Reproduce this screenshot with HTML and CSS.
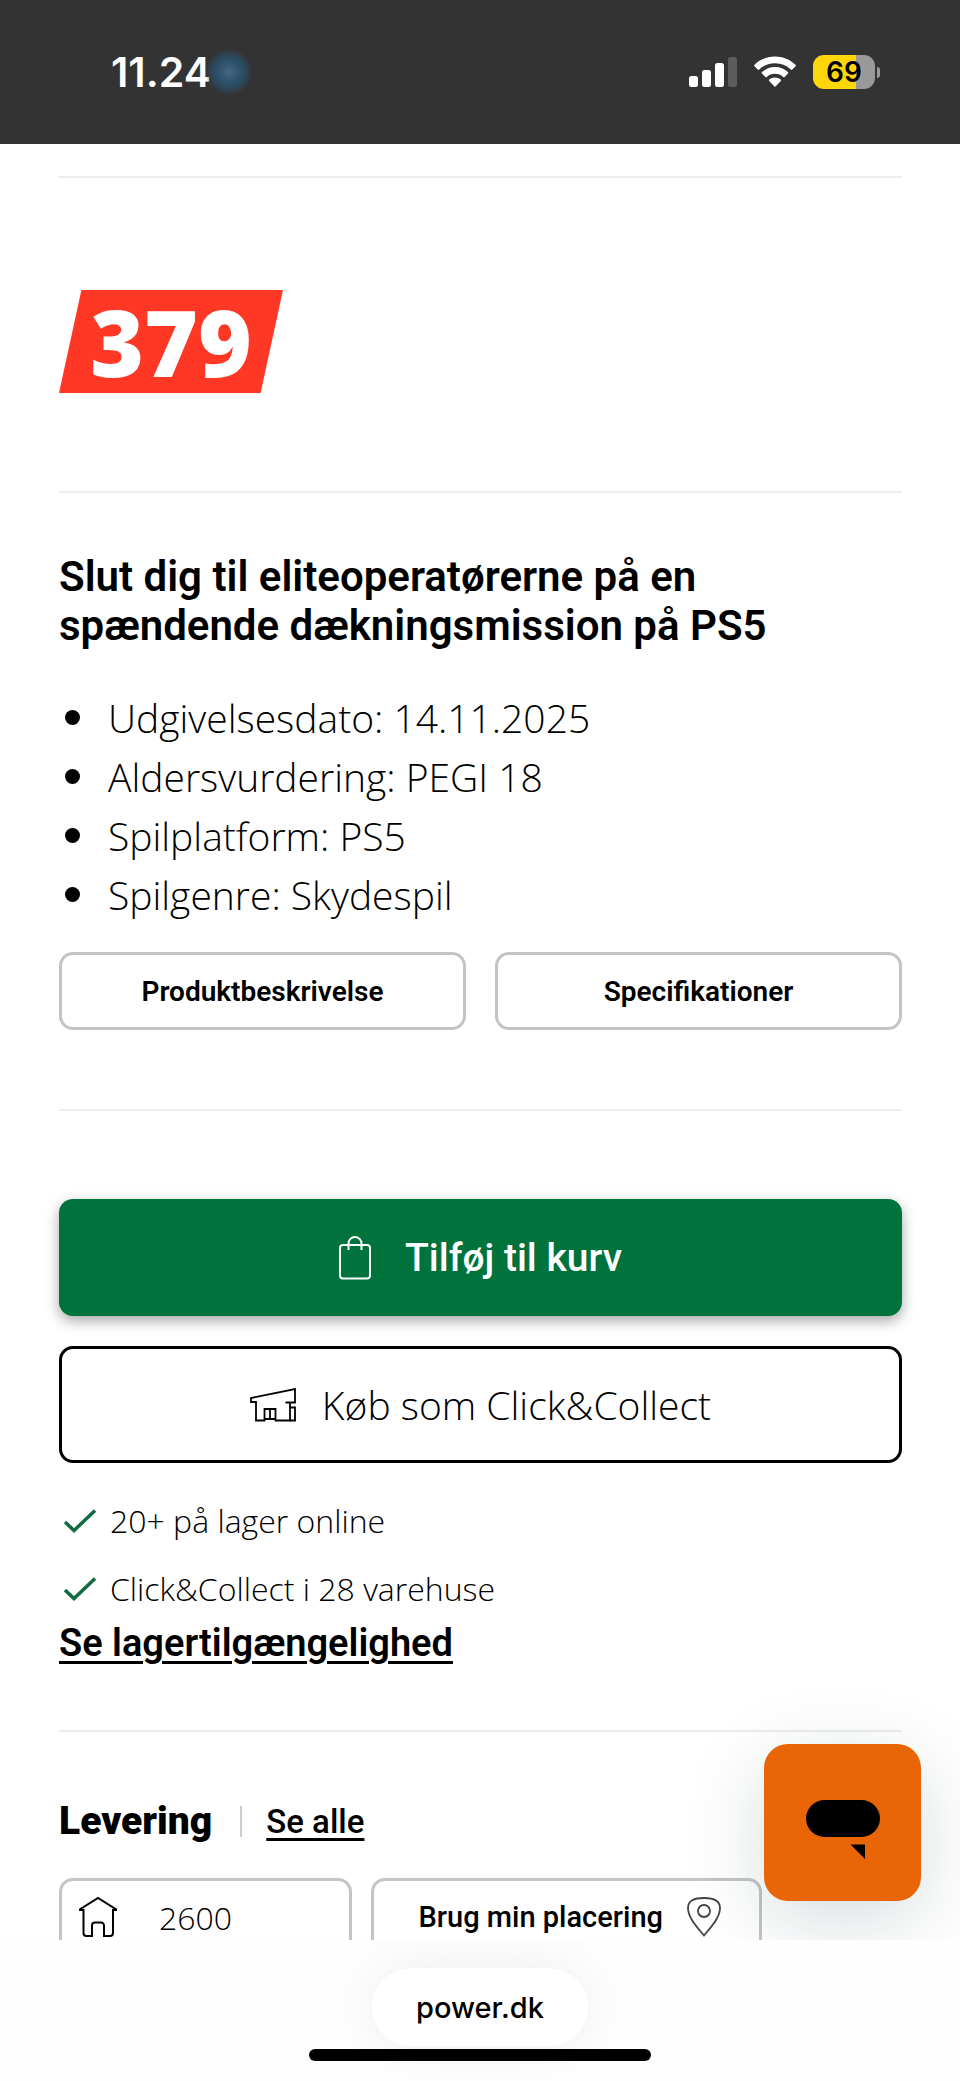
FILE: index.html
```html
<!DOCTYPE html>
<html lang="da">
<head>
<meta charset="utf-8">
<meta name="viewport" content="width=device-width, initial-scale=1">
<title>power.dk</title>
<link rel="stylesheet" href="styles.css">
</head>
<body>
<div class="screen">
  <header class="status">
    <div class="status-left">
      <span class="clock">11.24</span>
      <span class="glow"></span>
    </div>
    <div class="status-right">
      <svg class="signal" width="48" height="32" viewBox="0 0 48 32" aria-hidden="true">
        <rect x="0" y="20" width="9" height="11" rx="2.5" fill="#fff"/>
        <rect x="13" y="14" width="9" height="17" rx="2.5" fill="#fff"/>
        <rect x="26" y="7" width="9" height="24" rx="2.5" fill="#fff"/>
        <rect x="39" y="1" width="9" height="30" rx="2.5" fill="#5c5c5c"/>
      </svg>
      <svg class="wifi" width="42" height="32" viewBox="0 0 42 32" aria-hidden="true" fill="#fff">
        <path d="M21 0.500c8 0 15 3 20.500 8.300.5.500.5 1 0 1.500l-3.200 3.200c-.5.500-1 .5-1.500 0C32.500 9.400 27 7.300 21 7.300S9.500 9.400 5.200 13.500c-.5.500-1 .5-1.500 0L.5 10.300c-.5-.5-.5-1 0-1.500C6 3.500 13 .5 21 .5z"/>
        <path d="M21 11c5 0 9.500 1.900 13 5.100.5.500.5 1 0 1.500l-3.300 3.300c-.5.500-1 .500-1.500 0-2.200-2-5-3.200-8.200-3.200s-6 1.200-8.200 3.200c-.5.500-1 .5-1.500 0L8 17.600c-.5-.5-.5-1 0-1.500C11.500 12.900 16 11 21 11z"/>
        <path d="M21 21.400c2.200 0 4.200.8 5.800 2.200.5.500.5 1 0 1.500L21.800 30.300c-.5.500-1.100.5-1.600 0L15.200 25.100c-.5-.5-.5-1 0-1.500 1.600-1.400 3.600-2.200 5.800-2.200z"/>
      </svg>
      <div class="battery"><span class="battery-body">69</span><span class="battery-tip"></span></div>
    </div>
  </header>

  <main class="page">
    <section class="section price-section">
      <div class="price"><span>379</span></div>
    </section>

    <section class="section info-section">
      <h2 class="headline">Slut dig til eliteoperatørerne på en spændende dækningsmission på PS5</h2>
      <ul class="facts">
        <li>Udgivelsesdato: 14.11.2025</li>
        <li>Aldersvurdering: PEGI 18</li>
        <li>Spilplatform: PS5</li>
        <li>Spilgenre: Skydespil</li>
      </ul>
      <div class="pair">
        <button type="button" class="btn-small">Produktbeskrivelse</button>
        <button type="button" class="btn-small">Specifikationer</button>
      </div>
    </section>

    <section class="section buy-section">
      <button type="button" class="btn btn-cart">
        <svg width="32" height="44" viewBox="0 0 32 44" fill="none" stroke="#fff" stroke-width="2" aria-hidden="true">
          <rect x="1" y="9" width="30" height="33.500" rx="3"/>
          <path d="M9.500 14V7.500a6.500 6.500 0 0 1 13 0V14"/>
        </svg>
        Tilføj til kurv
      </button>
      <button type="button" class="btn btn-collect">
        <svg width="46" height="34" viewBox="0 0 46 34" fill="none" stroke="#000" stroke-width="1.800" aria-hidden="true">
          <path d="M41 14.500h4V1L1 10v4h5v18.500h8.500V21h11v11.500h14.500V14.500H35.500"/>
          <path d="M14.500 31h11M20 21v10M40 19.500h5v13h-5"/>
        </svg>
        Køb som Click&amp;Collect
      </button>
      <ul class="stock">
        <li>
          <svg width="32" height="24" viewBox="0 0 32 24" fill="none" stroke="#136c41" stroke-width="3.500" aria-hidden="true"><path d="M1 13l9 8.500L31 1.500"/></svg>
          20+ på lager online
        </li>
        <li>
          <svg width="32" height="24" viewBox="0 0 32 24" fill="none" stroke="#136c41" stroke-width="3.500" aria-hidden="true"><path d="M1 13l9 8.500L31 1.500"/></svg>
          Click&amp;Collect i 28 varehuse
        </li>
      </ul>
      <a class="stock-link" href="#">Se lagertilgængelighed</a>
    </section>

    <section class="section delivery-section">
      <div class="delivery-head">
        <h3>Levering</h3>
        <a href="#">Se alle</a>
      </div>
      <div class="delivery-row">
        <label class="zip">
          <svg width="38" height="40" viewBox="0 0 38 40" fill="none" stroke="#000" stroke-width="2" aria-hidden="true">
            <path d="M0 13L19 1l19 12h-4v23a3 3 0 0 1-3 3h-6V28.500a3 3 0 0 0-3-3h-6a3 3 0 0 0-3 3V39H7.500a3 3 0 0 1-3-3V13z"/>
          </svg>
          <input type="text" value="2600" aria-label="Postnummer">
        </label>
        <button type="button" class="locate">
          Brug min placering
          <svg width="34" height="40" viewBox="0 0 34 40" fill="none" stroke="#444" stroke-width="1.800" aria-hidden="true">
            <path d="M17 38.500C11 31 1 21 1 11 1 3.500 7 1 17 1s16 2.500 16 10c0 10-10 20-16 27.500z"/>
            <circle cx="17" cy="14" r="6"/>
          </svg>
        </button>
      </div>
    </section>

    <button type="button" class="chat" aria-label="Chat">
      <svg width="74" height="60" viewBox="0 0 74 60" aria-hidden="true">
        <rect width="74" height="37" rx="18.500"/>
        <path d="M44.500 44.500H59V59z"/>
      </svg>
    </button>
  </main>

  <footer class="browser-bar">
    <button type="button" class="address">power.dk</button>
    <div class="home-indicator"></div>
  </footer>
</div>
</body>
</html>
```
FILE: styles.css
```css
* { box-sizing: border-box; }

body {
  margin: 0;
  background: #fff;
  color: #000;
  font-family: Roboto, "Open Sans", sans-serif;
}

button, input { font: inherit; color: inherit; }
button { cursor: pointer; }
h2, h3, ul { margin: 0; padding: 0; }
svg { flex: none; display: block; }

.screen {
  display: flex;
  flex-direction: column;
  height: 100vh;
  overflow: hidden;
}

/* Status bar */
.status {
  display: flex;
  justify-content: space-between;
  align-items: center;
  flex: none;
  height: 144px;
  padding: 0 80px 0 111px;
  background: #333;
  color: #fff;
  font-family: Inter, sans-serif;
}
.status-left, .status-right { display: flex; align-items: center; }
.status-right { gap: 17px; }
.clock { font-size: 41px; font-weight: 600; }
.glow {
  width: 48px;
  height: 48px;
  margin-left: -6px;
  border-radius: 50%;
  background: radial-gradient(circle, #49657a 0, #2c536f 30%, #2d4659 50%, rgba(51, 51, 51, 0) 70%);
}
.battery { display: flex; align-items: center; gap: 2px; }
.battery-body {
  width: 62px;
  height: 34px;
  border-radius: 11px;
  background: linear-gradient(90deg, #ffd60a 69%, #999 69%);
  color: #000;
  font-size: 28px;
  font-weight: 600;
  line-height: 34px;
  text-align: center;
}
.battery-tip { width: 3px; height: 11px; border-radius: 0 4px 4px 0; background: #999; }

/* Page */
.page {
  position: relative;
  flex: 1;
  min-height: 0;
  padding: 32px 58px 0 59px;
  overflow: hidden;
}
.section { border-top: 2px solid #ededed; }

.price-section { padding: 112px 0 98px; }
.price {
  display: flex;
  align-items: center;
  justify-content: center;
  width: 224px;
  height: 103px;
  background: #ff3826;
  clip-path: polygon(10% 0, 100% 0, 90% 100%, 0 100%);
  color: #fff;
  font-family: "Open Sans", sans-serif;
  font-size: 92px;
  font-weight: 800;
  line-height: 103px;
}

.info-section { padding: 59px 0 79px; }
.headline { font-size: 42px; font-weight: 600; line-height: 49px; }
.facts {
  padding: 38px 0 0 49px;
  font-family: "Open Sans", sans-serif;
  font-size: 39px;
  font-weight: 350;
  line-height: 59px;
  list-style: none;
}
.facts li { display: flex; align-items: center; }
.facts li::before {
  content: "";
  width: 15px;
  height: 15px;
  margin: 0 28px 0 -43px;
  border-radius: 50%;
  background: #000;
}
.pair { display: grid; grid-template-columns: 1fr 1fr; gap: 29px; padding-top: 28px; }
.btn-small {
  height: 78px;
  border: 3px solid #c4c4c4;
  border-radius: 14px;
  background: #fff;
  font-size: 28px;
  font-weight: 600;
}

.buy-section { padding: 88px 0 63px; }
.btn {
  display: flex;
  align-items: center;
  justify-content: center;
  width: 100%;
  height: 117px;
  border-radius: 14px;
}
.btn-cart {
  gap: 34px;
  border: 0;
  background: #00723c;
  box-shadow: 0 5px 14px rgba(0, 0, 0, 0.35);
  color: #fff;
  font-size: 39px;
  font-weight: 500;
}
.btn-collect {
  gap: 26px;
  margin-top: 30px;
  border: 3px solid #000;
  background: #fff;
  font-family: "Open Sans", sans-serif;
  font-size: 39px;
  font-weight: 350;
}
.stock {
  display: grid;
  gap: 20px;
  padding: 34px 0 0 5px;
  font-family: "Open Sans", sans-serif;
  font-size: 32px;
  font-weight: 350;
  line-height: 48px;
  list-style: none;
}
.stock li { display: flex; align-items: center; gap: 14px; }
.stock-link {
  display: block;
  width: fit-content;
  padding-top: 6px;
  color: inherit;
  font-size: 38px;
  font-weight: 600;
  line-height: 48px;
  text-decoration-thickness: 3px;
  text-underline-offset: 5px;
}

.delivery-section { padding-top: 63px; }
.delivery-head { display: flex; align-items: center; }
.delivery-head h3 {
  padding-right: 28px;
  font-size: 39px;
  font-weight: 900;
  line-height: 52px;
}
.delivery-head a {
  display: flex;
  align-items: center;
  color: inherit;
  font-size: 33px;
  font-weight: 500;
  text-decoration-thickness: 3px;
  text-underline-offset: 5px;
}
.delivery-head a::before {
  content: "";
  width: 2px;
  height: 31px;
  margin-right: 24px;
  background: #ccc;
}
.delivery-row { display: flex; gap: 19px; padding-top: 31px; }
.zip, .locate {
  display: flex;
  align-items: center;
  height: 78px;
  border: 3px solid #c4c4c4;
  border-radius: 14px;
  background: #fff;
}
.zip { width: 293px; padding-left: 17px; gap: 42px; }
.zip input {
  width: 160px;
  padding: 0;
  border: 0;
  outline: 0;
  background: none;
  font-family: "Open Sans", sans-serif;
  font-size: 32px;
  font-weight: 350;
}
.locate {
  width: 391px;
  justify-content: flex-end;
  gap: 24px;
  padding: 0 38px 0 0;
  font-size: 29px;
  font-weight: 500;
}

.chat {
  position: absolute;
  right: 39px;
  bottom: 39px;
  display: flex;
  align-items: center;
  justify-content: center;
  width: 157px;
  height: 157px;
  padding: 14px 0 0;
  border: 0;
  border-radius: 24px;
  background: #ea6506;
  box-shadow: 0 20px 80px rgba(0, 40, 50, 0.16);
}

/* Browser bar */
.browser-bar {
  display: flex;
  flex-direction: column;
  align-items: center;
  flex: none;
  height: 141px;
  padding-top: 28px;
  background: #fefefe;
}
.address {
  height: 78px;
  padding: 0 44px;
  border: 0;
  border-radius: 39px;
  background: #fff;
  box-shadow: 0 0 50px rgba(0, 0, 0, 0.07);
  font-family: Inter, sans-serif;
  font-size: 29px;
  font-weight: 500;
}
.home-indicator {
  position: relative;
  width: 342px;
  height: 12px;
  margin-top: 3px;
  border-radius: 6px;
  background: #000;
}
```
